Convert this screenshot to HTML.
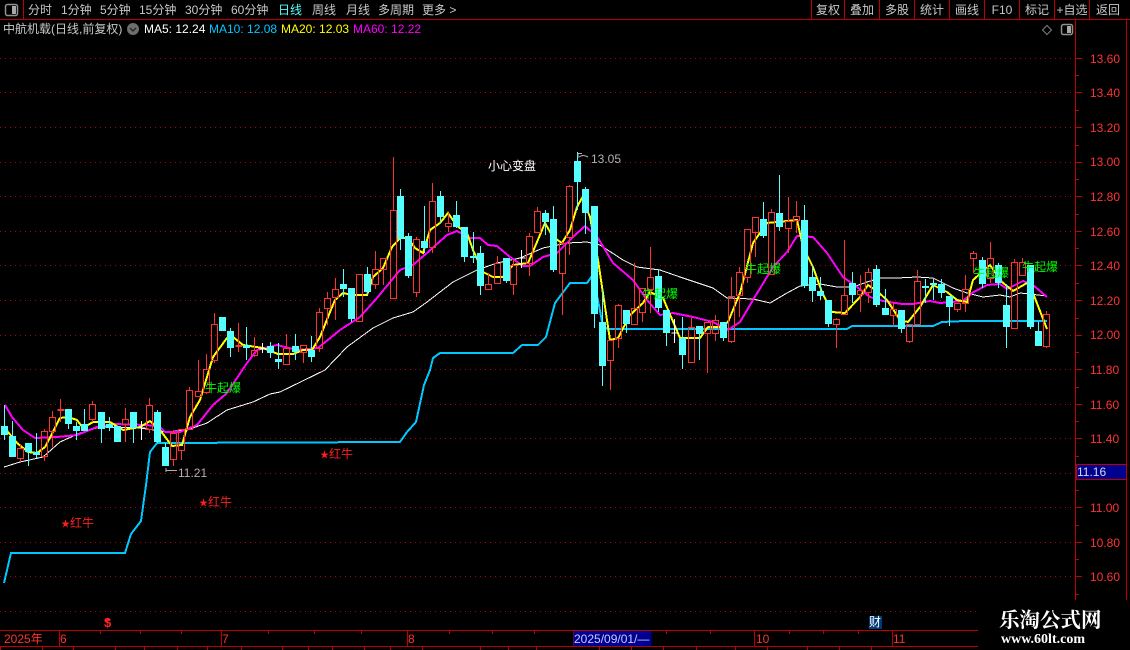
<!DOCTYPE html>
<html><head><meta charset="utf-8">
<style>
html,body{margin:0;padding:0;background:#000;}
#p{position:relative;width:1130px;height:650px;overflow:hidden;background:#000;font:12px/16px "Liberation Sans","WenQuanYi Zen Hei","Noto Sans CJK SC",sans-serif;color:#c8c8c8;}
#p svg{position:absolute;left:0;top:0;}
.t{position:absolute;white-space:nowrap;height:16px;}
.b{position:absolute;top:2px;text-align:center;white-space:nowrap;height:16px;}
.y{position:absolute;left:1090px;color:#ff3232;white-space:nowrap;}
.g{position:absolute;color:#00ff00;white-space:nowrap;}
.r{position:absolute;color:#ff2020;white-space:nowrap;}
.r span{font-size:9px;}
.d{position:absolute;top:631px;color:#ff3232;white-space:nowrap;}
</style></head><body><div id="p">
<svg width="1130" height="650" viewBox="0 0 1130 650">
<!-- grid -->
<path fill="none" stroke="#b00000" stroke-dasharray="1 4" d="M0 58.5H1075M0 92.5H1075M0 127.5H1075M0 162.5H1075M0 196.5H1075M0 231.5H1075M0 265.5H1075M0 300.5H1075M0 335.5H1075M0 369.5H1075M0 404.5H1075M0 438.5H1075M0 473.5H1075M0 507.5H1075M0 542.5H1075M0 576.5H1075M0 611.5H978"/>
<!-- frame -->
<path fill="none" stroke="#c00000" shape-rendering="crispEdges" d="M0 19.5H1130M23.5 0V19M811.5 0V19M844.5 0V19M879.5 0V19M914.5 0V19M949.5 0V19M984.5 0V19M1019.5 0V19M1054.5 0V19M1089.5 0V19M1075.5 19V600M1126.5 19V600
M1076 58.5h6M1076 75.5h3M1076 92.5h6M1076 110.5h3M1076 127.5h6M1076 145.5h3M1076 162.5h6M1076 179.5h3M1076 196.5h6M1076 214.5h3M1076 231.5h6M1076 248.5h3M1076 265.5h6M1076 283.5h3M1076 300.5h6M1076 318.5h3M1076 335.5h6M1076 352.5h3M1076 369.5h6M1076 387.5h3M1076 404.5h6M1076 421.5h3M1076 438.5h6M1076 456.5h3M1076 490.5h3M1076 507.5h6M1076 525.5h3M1076 542.5h6M1076 559.5h3M1076 576.5h6M1076 594.5h3
M0 630.5H978M0 646.5H978M59.5 631V646M221.5 631V646M407.5 631V646M573.5 631V646M754.5 631V646M892.5 631V646
M100.5 631v3M140.5 631v3M181.5 631v3M268.5 631v3M314.5 631v3M361.5 631v3M449.5 631v3M492.5 631v3M534.5 631v3M666.5 631v3M710.5 631v3M789.5 631v3M823.5 631v3M858.5 631v3
M0.5 647V650M42.5 647V650M73.5 647V650M115.5 647V650M144.5 647V650M177.5 647V650M207.5 647V650M241.5 647V650M282.5 647V650M308.5 647V650M332.5 647V650M364.5 647V650M390.5 647V650M422.5 647V650M480.5 647V650M508.5 647V650M536.5 647V650M599.5 647V650M631.5 647V650M663.5 647V650M696.5 647V650M735.5 647V650M767.5 647V650M807.5 647V650M839.5 647V650M871.5 647V650"/>
<!-- lines -->
<g fill="none" shape-rendering="crispEdges">
<polyline stroke="#00c8ff" stroke-width="2" points="4,583 11,553 125,553 131,534 141,521 146,485 150,452 157,443 400,442 407,432 416,422 424,385 430,370 433,358 440,353 513,353 522,345 538,345 546,337 555,303 570,283 587,283 592,276 598,300 603,327 608,329 847,329 852,326 933,326 942,322 965,321 1047,321"/>
<polyline stroke="#ffffff" stroke-width="1" points="4,467 20,462 43,457 60,442 80,433 100,427 140,428 167,432 187,430 207,423 227,410 253,402 270,394 280,392 325,370 347,347 373,328 393,318 413,312 427,302 453,282 477,270 497,263 520,258 543,248 567,243 587,242 600,245 623,260 637,267 660,270 680,277 713,288 727,298 753,299 770,303 787,293 800,286 820,284 837,287 853,287 867,282 880,278 897,278 917,277 933,278 953,288 967,293 983,297 1000,295 1010,297 1020,293 1047,296"/>
<polyline stroke="#ff00ff" stroke-width="2" points="5,405 12,417 23,430 35,438 57,437 77,435 97,427 113,424 147,425 160,427 165,432 180,432 197,425 213,405 227,393 247,363 257,350 277,345 297,350 318,348 340,330 360,317 377,298 400,270 413,265 427,253 447,235 457,231 470,238 480,238 488,245 497,246 510,257 523,266 530,266 543,257 557,253 573,237 585,226 598,238 613,263 633,280 647,300 660,315 673,313 693,317 713,322 728,330 740,322 753,300 773,267 787,252 797,236 813,237 827,253 843,277 857,287 870,297 883,301 902,304 913,304 930,301 940,303 963,301 972,293 987,285 1000,284 1007,289 1023,281 1033,285 1047,297"/>
<polyline stroke="#ffff00" stroke-width="2" points="5,428 8,432 17,443 28,452 37,453 45,447 53,432 60,418 68,417 77,420 83,428 93,422 110,422 123,430 140,427 150,421 160,430 172,446 182,445 190,417 200,400 213,357 227,338 233,337 243,345 263,348 278,354 293,354 303,350 312,350 320,337 330,312 335,300 343,293 352,295 367,295 373,277 383,268 392,247 400,238 408,238 415,248 423,253 430,230 440,223 448,213 457,226 467,233 473,250 483,272 493,277 503,277 513,265 528,263 537,242 545,223 553,237 562,243 570,230 577,207 582,198 590,217 598,260 610,340 618,338 630,315 643,303 650,292 663,298 680,338 700,338 708,327 720,327 728,322 740,293 753,243 767,223 777,222 797,220 803,247 813,267 822,292 832,312 845,313 860,297 868,285 878,292 887,300 900,320 908,322 920,307 933,285 947,292 957,300 967,302 973,280 990,265 1002,282 1013,291 1027,283 1033,293 1047,329"/>
</g>
<!-- candles -->
<g transform="translate(.5,0)" fill="none" shape-rendering="crispEdges">
<path stroke="#54ffff" d="M4 405V440M12 421V457M28 443V466M36 433V458M68 409V429M76 422V440M84 409V431M101 412V443M109 417V431M117 426V442M133 412V443M157 410V443M165 443V466M222 317V331M230 328V357M246 327V360M270 342V358M278 343V369M295 334V360M311 336V362M343 269V297M351 288V322M367 267V295M400 189V250M408 233V278M424 206V253M440 191V223M456 201V228M464 227V262M473 232V263M480 246V295M506 258V283M545 210V235M553 206V272M577 152V210M585 187V234M594 206V328M602 290V386M626 310V333M658 269V312M666 310V346M682 317V369M699 326V360M723 322V341M763 202V238M779 175V231M804 205V288M812 265V302M820 277V300M828 300V327M852 272V303M876 265V307M885 289V315M901 310V333M925 279V303M933 279V300M941 279V298M949 296V326M982 257V288M998 263V288M1006 284V348M1030 265V329M1038 322V346"/>
<path stroke="#54ffff" stroke-width="7" d="M4 426V435M12 436V457M28 443V452M36 452V455M68 409V424M76 426V431M84 424V431M101 412V429M109 424V428M117 426V442M133 412V428M157 412V442M165 447V466M222 317V331M230 331V348M246 345V348M270 346V353M278 359V362M295 346V352M311 350V357M343 284V289M351 288V319M367 274V292M400 196V239M408 236V276M424 241V248M440 196V217M456 215V227M464 227V257M473 256V258M480 253V286M506 258V281M545 213V222M553 219V270M577 161V182M585 189V213M594 206V314M602 322V366M626 310V324M658 276V308M666 310V333M682 338V355M699 326V334M723 322V338M763 219V236M779 213V227M804 220V286M812 277V291M820 291V296M828 300V324M852 283V295M876 269V305M885 308V315M901 310V329M925 286V288M933 283V285M941 284V293M949 296V307M982 260V284M998 265V283M1006 305V327M1030 265V327M1038 331V346"/>
<path stroke="#ff3232" d="M20 444V448M20 458V462M44 429V431M44 456V461M52 411V417M52 431V447M60 399V409M60 411V422M92 401V404M92 419V422M125 408V419M125 424V442M149 398V405M149 429V433M173 430V433M173 459V466M181 450V460M189 387V390M198 360V391M206 354V369M206 392V394M214 313V324M214 360V363M238 323V345M238 347V352M254 337V350M254 355V357M286 334V348M303 352V363M319 308V312M319 348V352M327 292V298M327 308V325M335 278V289M335 297V320M375 251V269M375 284V289M383 269V285M393 157V210M416 237V239M416 292V297M432 183V201M432 247V253M448 213V223M448 226V232M488 273V284M497 256V263M513 260V265M513 284V295M529 233V236M529 263V276M537 207V211M562 242V243M562 273V315M569 185V186M569 237V255M610 360V390M618 304V305M618 338V348M634 263V308M642 312V322M650 247V277M650 289V313M691 318V327M707 333V373M715 315V320M715 333V341M731 277V296M731 341V343M739 267V272M739 295V317M747 277V283M755 232V257M771 209V212M788 197V221M788 228V253M796 201V216M796 220V233M836 318V319M836 324V348M844 240V295M860 275V290M860 294V312M868 268V272M868 292V303M893 302V309M893 315V326M909 341V343M917 270V281M957 309V312M965 275V289M965 303V312M973 251V253M973 258V273M990 242V258M990 278V283M1014 259V262M1022 258V262M1046 311V314M1046 346V348"/>
<path stroke="#ff3232" stroke-width="2" d="M57 410h7M235 346h7"/>
<g transform="translate(0,.5)"><path stroke="#ff3232" d="M17 448h6V458h-6zM41 431h6V456h-6zM49 417h6V431h-6zM89 404h6V419h-6zM122 419h6V424h-6zM146 405h6V429h-6zM170 433h6V459h-6zM178 429h6V450h-6zM186 390h6V429h-6zM195 391h6V396h-6zM203 369h6V392h-6zM211 324h6V360h-6zM251 350h6V355h-6zM283 348h6V364h-6zM300 345h6V352h-6zM316 312h6V348h-6zM324 298h6V308h-6zM332 289h6V297h-6zM356 274h6V321h-6zM372 269h6V284h-6zM380 258h6V269h-6zM390 210h6V298h-6zM413 239h6V292h-6zM429 201h6V247h-6zM445 223h6V226h-6zM485 284h6V289h-6zM494 263h6V283h-6zM510 265h6V284h-6zM526 236h6V263h-6zM534 211h6V232h-6zM559 243h6V273h-6zM566 186h6V237h-6zM607 340h6V360h-6zM615 305h6V338h-6zM631 308h6V324h-6zM639 288h6V312h-6zM647 277h6V289h-6zM688 327h6V362h-6zM704 322h6V333h-6zM712 320h6V333h-6zM728 296h6V341h-6zM736 272h6V295h-6zM744 229h6V277h-6zM752 217h6V232h-6zM768 212h6V274h-6zM785 221h6V228h-6zM793 216h6V220h-6zM833 319h6V324h-6zM841 295h6V314h-6zM857 290h6V294h-6zM865 272h6V292h-6zM890 309h6V315h-6zM906 324h6V341h-6zM914 281h6V324h-6zM954 303h6V309h-6zM962 289h6V303h-6zM970 253h6V258h-6zM987 258h6V278h-6zM1011 262h6V328h-6zM1019 262h6V275h-6zM1043 314h6V346h-6z"/></g>
<path stroke="#ffffff" d="M141 421V440M138 428h7M262 343V353M259 349h7M521 250V268M518 258h7M674 319V343M671 333h7"/>
</g>
<!-- icons -->
<g fill="none" stroke="#a0a0a0" shape-rendering="auto">
<rect x="5.5" y="4.5" width="12" height="11" rx="2" stroke="#909090" stroke-width="1.5"/>
<rect x="1061.5" y="24.5" width="11" height="10" rx="2" stroke="#909090" stroke-width="1.5"/>
<path d="M1047 25.5l4.5 4.5-4.5 4.5-4.5-4.5z" stroke="#808080"/>
</g>
<rect x="12" y="6" width="4" height="8" fill="#a8a8a8"/>
<rect x="1067" y="26" width="4" height="7" fill="#a8a8a8"/>
<circle cx="133" cy="29" r="6" fill="#6e6e6e"/>
<path d="M130 28l3 3 3-3" fill="none" stroke="#222" stroke-width="1.3"/>
<!-- price marks -->
<path fill="none" stroke="#b0b0b0" d="M166 468v4M166 470.5h11M578 153v5M578 153.5h4M579 157c3-2 5-2 9 0"/>
<path d="M107.500 618l2.500 3h-5z" fill="#ff2020"/>
<!-- current label -->
<rect x="1076.5" y="464.5" width="50" height="15" fill="#000090" stroke="#c00000"/>
<rect x="573.5" y="631" width="78" height="15" fill="#000090"/>
<rect x="869" y="616" width="13" height="13" fill="#003878"/>
</svg>

<div class="t" style="left:28px;top:2px">分时</div>
<div class="t" style="left:61px;top:2px">1分钟</div>
<div class="t" style="left:100px;top:2px">5分钟</div>
<div class="t" style="left:139px;top:2px">15分钟</div>
<div class="t" style="left:185px;top:2px">30分钟</div>
<div class="t" style="left:231px;top:2px">60分钟</div>
<div class="t" style="left:278px;top:2px;color:#54ffff">日线</div>
<div class="t" style="left:312px;top:2px">周线</div>
<div class="t" style="left:346px;top:2px">月线</div>
<div class="t" style="left:378px;top:2px">多周期</div>
<div class="t" style="left:422px;top:2px">更多 &gt;</div>

<div class="b" style="left:812px;width:32px">复权</div>
<div class="b" style="left:845px;width:34px">叠加</div>
<div class="b" style="left:880px;width:34px">多股</div>
<div class="b" style="left:915px;width:34px">统计</div>
<div class="b" style="left:950px;width:34px">画线</div>
<div class="b" style="left:985px;width:34px">F10</div>
<div class="b" style="left:1020px;width:34px">标记</div>
<div class="b" style="left:1055px;width:34px">+自选</div>
<div class="b" style="left:1090px;width:36px">返回</div>

<div class="t" style="left:3px;top:21px">中航机载(日线,前复权)</div>
<div class="t" style="left:144px;top:21px;color:#fff">MA5: 12.24</div>
<div class="t" style="left:209px;top:21px;color:#00c8ff">MA10: 12.08</div>
<div class="t" style="left:281px;top:21px;color:#ffff00">MA20: 12.03</div>
<div class="t" style="left:353px;top:21px;color:#ff00ff">MA60: 12.22</div>

<div class="y" style="top:51px">13.60</div>
<div class="y" style="top:85px">13.40</div>
<div class="y" style="top:120px">13.20</div>
<div class="y" style="top:154px">13.00</div>
<div class="y" style="top:189px">12.80</div>
<div class="y" style="top:224px">12.60</div>
<div class="y" style="top:258px">12.40</div>
<div class="y" style="top:293px">12.20</div>
<div class="y" style="top:327px">12.00</div>
<div class="y" style="top:362px">11.80</div>
<div class="y" style="top:397px">11.60</div>
<div class="y" style="top:431px">11.40</div>
<div class="y" style="top:500px">11.00</div>
<div class="y" style="top:535px">10.80</div>
<div class="y" style="top:569px">10.60</div>
<div class="t" style="left:1077px;top:464px;color:#d8d8e8">11.16</div>

<div class="t" style="left:488px;top:158px;color:#fff">小心变盘</div>
<div class="t" style="left:591px;top:151px;color:#b0b0b0">13.05</div>
<div class="t" style="left:178px;top:465px;color:#b0b0b0">11.21</div>

<div class="g" style="left:205px;top:380px">牛起爆</div>
<div class="g" style="left:745px;top:261px">牛起爆</div>
<div class="g" style="left:642px;top:286px">牛起爆</div>
<div class="g" style="left:973px;top:265px">牛起爆</div>
<div class="g" style="left:1022px;top:259px">牛起爆</div>

<div class="r" style="left:61px;top:515px"><span>★</span>红牛</div>
<div class="r" style="left:199px;top:494px"><span>★</span>红牛</div>
<div class="r" style="left:320px;top:446px"><span>★</span>红牛</div>
<div class="r" style="left:104px;top:615px;font-weight:bold;font-size:13px">$</div>
<div class="t" style="left:869px;top:614px;color:#fff">财</div>

<div class="d" style="left:4px">2025年</div>
<div class="d" style="left:60px">6</div>
<div class="d" style="left:222px">7</div>
<div class="d" style="left:408px">8</div>
<div class="d" style="left:574px;color:#c8c8ff">2025/09/01/—</div>
<div class="d" style="left:756px">10</div>
<div class="d" style="left:893px">11</div>

<div style="position:absolute;left:978px;top:600px;width:152px;height:50px;background:#000"></div>
<div class="t" style="left:999px;top:606px;height:24px;font:bold 20.5px/24px 'Noto Serif CJK SC','Liberation Serif',serif;color:#fff">乐淘公式网</div>
<div class="t" style="left:1001px;top:632px;height:16px;font:bold 14px/16px 'Liberation Serif',serif;color:#fff">www.60lt.com</div>
</div></body></html>
